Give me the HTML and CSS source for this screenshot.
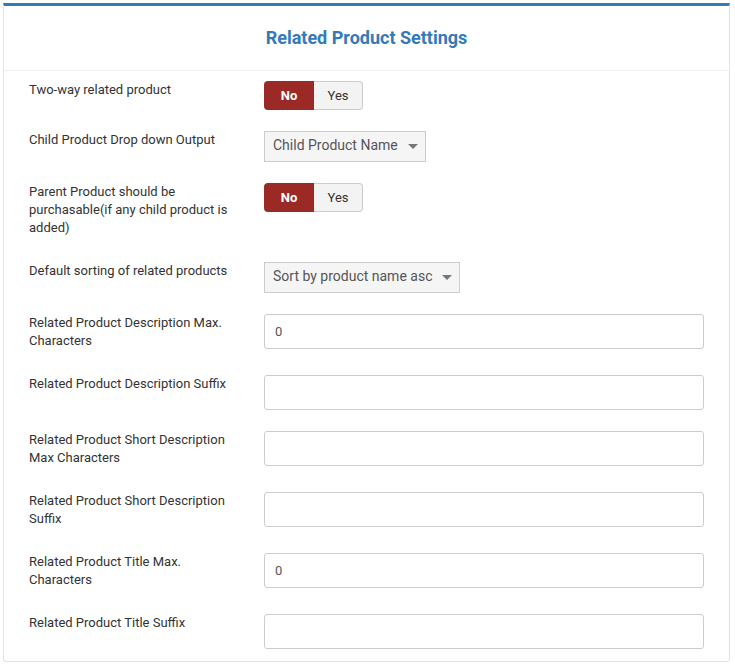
FILE: index.html
```html
<!DOCTYPE html>
<html>
<head>
<meta charset="utf-8">
<link rel="stylesheet" href="styles.css">
</head>
<body>
<div class="panel">
  <div class="panel-head"><h2 class="title">Related Product Settings</h2></div>
  <div class="panel-body">
    <div class="row">
      <div class="label">Two-way related product</div>
      <div class="control"><div class="toggle"><span class="opt opt-on">No</span><span class="opt opt-off">Yes</span></div></div>
    </div>
    <div class="row">
      <div class="label">Child Product Drop down Output</div>
      <div class="control"><div class="select">Child Product Name<span class="caret"></span></div></div>
    </div>
    <div class="row">
      <div class="label">Parent Product should be purchasable(if any child product is added)</div>
      <div class="control"><div class="toggle"><span class="opt opt-on">No</span><span class="opt opt-off">Yes</span></div></div>
    </div>
    <div class="row">
      <div class="label">Default sorting of related products</div>
      <div class="control"><div class="select">Sort by product name asc<span class="caret"></span></div></div>
    </div>
    <div class="row">
      <div class="label">Related Product Description Max. Characters</div>
      <div class="control"><input class="input" type="text" value="0"></div>
    </div>
    <div class="row">
      <div class="label">Related Product Description Suffix</div>
      <div class="control"><input class="input" type="text" value=""></div>
    </div>
    <div class="row">
      <div class="label">Related Product Short Description Max Characters</div>
      <div class="control"><input class="input" type="text" value=""></div>
    </div>
    <div class="row">
      <div class="label">Related Product Short Description Suffix</div>
      <div class="control"><input class="input" type="text" value=""></div>
    </div>
    <div class="row">
      <div class="label">Related Product Title Max. Characters</div>
      <div class="control"><input class="input" type="text" value="0"></div>
    </div>
    <div class="row row-last">
      <div class="label">Related Product Title Suffix</div>
      <div class="control"><input class="input" type="text" value=""></div>
    </div>
  </div>
</div>
</body>
</html>
```
FILE: styles.css
```css
html, body { margin: 0; padding: 0; background: #fff; }
body { font-family: Roboto, "Liberation Sans", sans-serif; color: #333; }
.panel {
  margin: 3px 0 0 3px;
  width: 725px;
  border: 1px solid #e3e3e3;
  border-top: 3px solid #337ab7;
  border-radius: 0 0 4px 4px;
  box-shadow: 0 1px 1px rgba(0,0,0,0.04);
}
.panel-head {
  height: 64px;
  border-bottom: 1px solid #eeeeee;
  display: flex;
  align-items: center;
  justify-content: center;
}
.title {
  margin: 0;
  font-size: 18px;
  font-weight: 700;
  color: #337ab7;
  position: relative;
  top: -1px;
}
.panel-body { padding: 10px 25px 12px 25px; }
.row { display: flex; align-items: flex-start; margin-bottom: 20px; }
.row-last { margin-bottom: 0; }
.label {
  width: 205px;
  margin-right: 30px;
  font-size: 13px;
  line-height: 18px;
  padding-bottom: 5px;
  color: #333;
}
.control { flex: 1; display: flex; padding-bottom: 1px; }
.row-last .control { padding-bottom: 0; }
.toggle { display: flex; height: 29px; }
.opt {
  display: flex; align-items: center; justify-content: center;
  font-size: 13px; box-sizing: border-box; height: 29px;
}
.opt-on {
  width: 50px; background: #9b2a27; color: #fff; font-weight: 700;
  border-radius: 4px 0 0 4px;
}
.opt-off {
  width: 49px; background: #f3f3f3; color: #333;
  border: 1px solid #cccccc; border-left: none;
  border-radius: 0 4px 4px 0;
}
.select {
  box-sizing: border-box;
  height: 31px;
  padding: 0 7px 3px 8px;
  border: 1px solid #cccccc;
  background: #f5f5f5;
  color: #555;
  font-size: 14px;
  display: flex;
  align-items: center;
}
.caret {
  display: inline-block;
  margin-left: 10px;
  width: 0; height: 0;
  border-left: 5px solid transparent;
  border-right: 5px solid transparent;
  border-top: 5px solid #777;
  margin-top: 2px;
}
.input {
  box-sizing: border-box;
  width: 440px;
  height: 35px;
  margin: 0;
  border: 1px solid #cccccc;
  border-radius: 3px;
  padding: 0 10px;
  font-family: Roboto, "Liberation Sans", sans-serif;
  font-size: 13px;
  color: #555;
  background: #fff;
  outline: none;
}
```
